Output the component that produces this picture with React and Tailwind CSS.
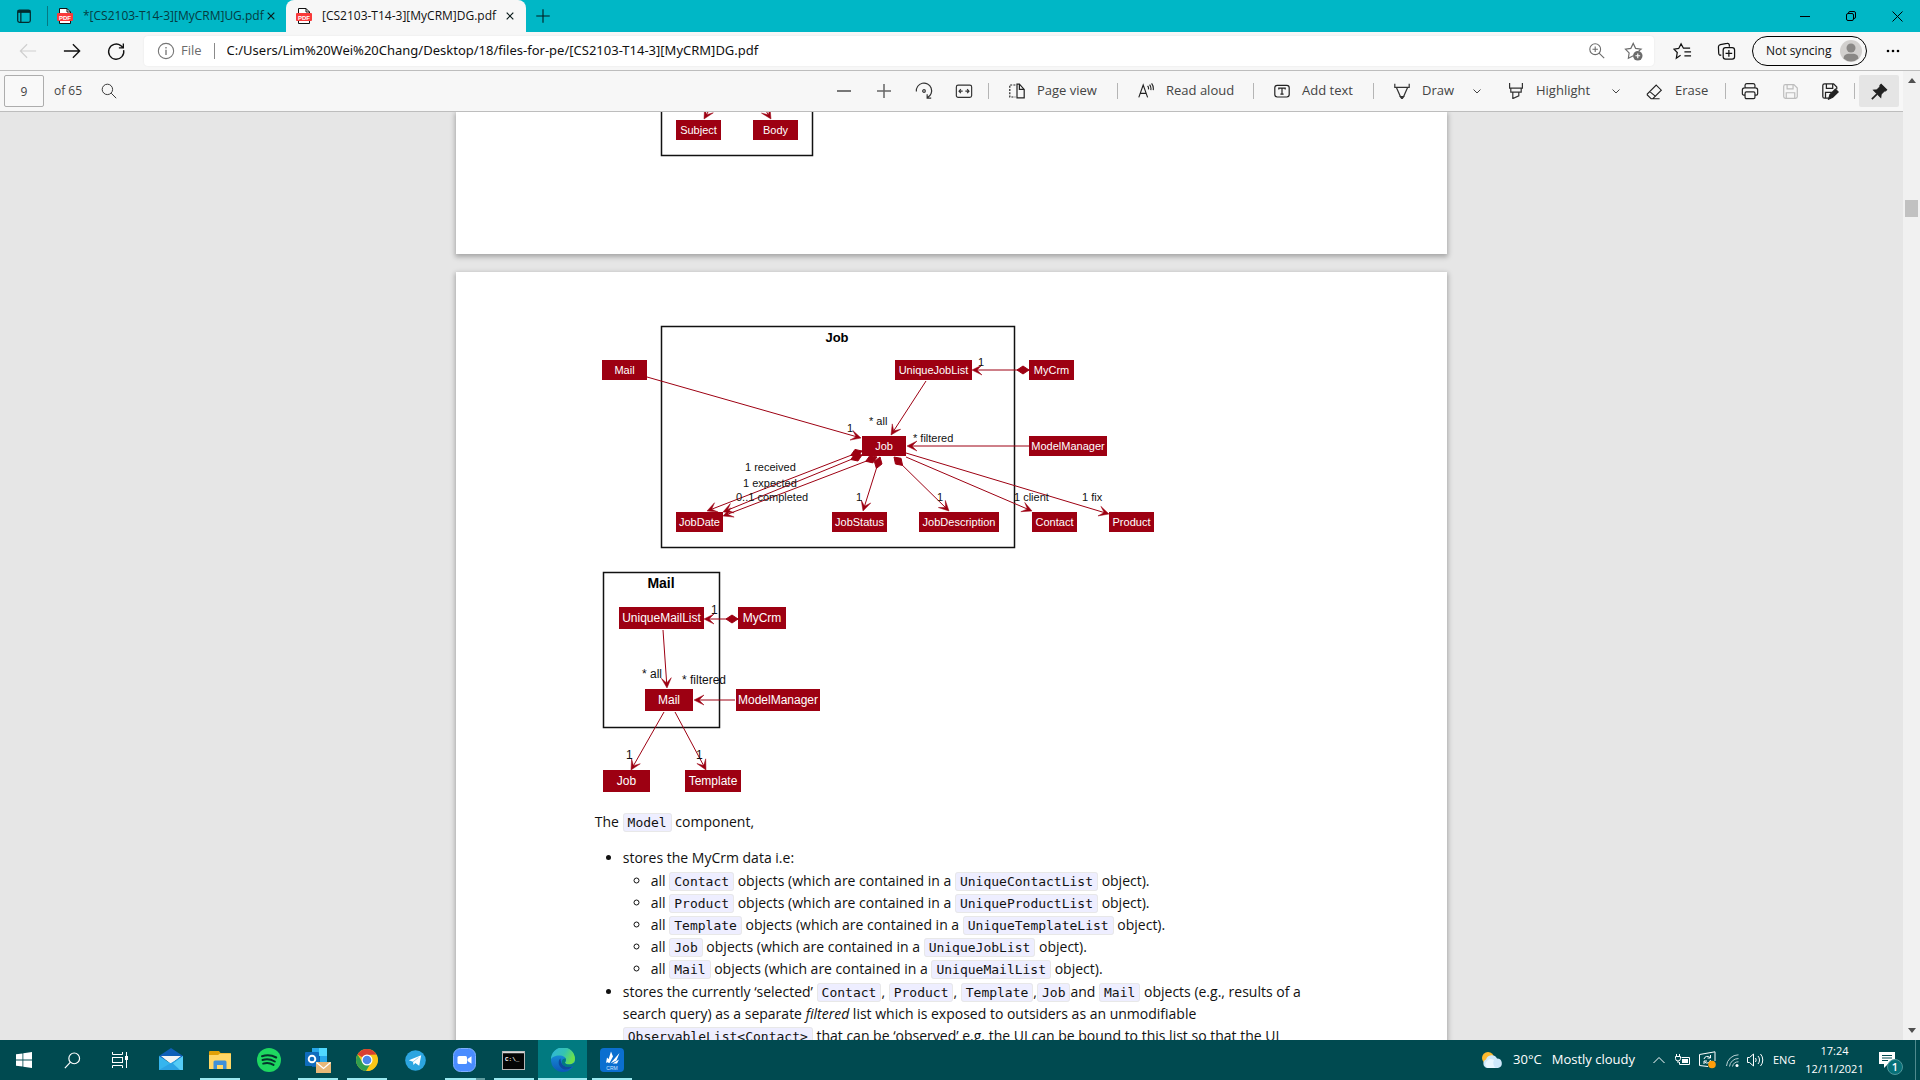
import React from "react";

const RED = "#9d0012";

function Icon({ size = 18, color = "currentColor", width = 1.2, children }) {
  return (
    <svg width={size} height={size} viewBox="0 0 20 20" fill="none" stroke={color} strokeWidth={width} className="shrink-0" aria-hidden="true">
      {children}
    </svg>
  );
}

/* ---------- class diagram parts ---------- */

function Node({ x, y, w, h = 20, size = 11, children }) {
  return (
    <g>
      <rect x={x} y={y} width={w} height={h} fill={RED} />
      <text x={x + w / 2} y={y + h / 2 + 4} fontSize={size} fill="#fff" textAnchor="middle">{children}</text>
    </g>
  );
}

function Edge({ from, to, diamond }) {
  const [x1, y1] = from;
  const [x2, y2] = to;
  const len = Math.hypot(x2 - x1, y2 - y1);
  const ux = (x2 - x1) / len;
  const uy = (y2 - y1) / len;
  const at = (x, y, along, side) => `${x + ux * along - uy * side},${y + uy * along + ux * side}`;
  const head = [at(x2, y2, 0, 0), at(x2, y2, -10, -5), at(x2, y2, -5, 0), at(x2, y2, -10, 5)].join(" ");
  const tail = [at(x1, y1, 0, 0), at(x1, y1, 6, 4), at(x1, y1, 12, 0), at(x1, y1, 6, -4)].join(" ");
  return (
    <g stroke={RED} fill={RED} strokeWidth="1">
      <line x1={x1} y1={y1} x2={x2 - ux * 4} y2={y2 - uy * 4} />
      <polygon points={head} strokeWidth="0.5" />
      {diamond && <polygon points={tail} />}
    </g>
  );
}

function Label({ x, y, size = 11, children }) {
  return <text x={x} y={y} fontSize={size} fill="#111">{children}</text>;
}

function TemplateDiagram() {
  return (
    <svg viewBox="595 112 260 46" width="260" height="46" className="block font-['Liberation_Sans',sans-serif]" role="img" aria-label="Template class diagram">
      <path d="M661.5 112V155.5H812.5V112" fill="none" stroke="#111" strokeWidth="1.5" />
      <Edge from={[716, 98]} to={[704, 119]} />
      <Edge from={[758, 98]} to={[771, 119]} />
      <Node x={676} y={120} w={45}>Subject</Node>
      <Node x={753} y={120} w={45}>Body</Node>
    </svg>
  );
}

function JobDiagram() {
  return (
    <svg viewBox="595 325 560 224" width="560" height="224" className="block font-['Liberation_Sans',sans-serif]" role="img" aria-label="Job class diagram">
      <rect x="661.5" y="326.5" width="353" height="221" fill="none" stroke="#111" strokeWidth="1.5" />
      <text x="837" y="342" fontSize="13" fontWeight="700" textAnchor="middle">Job</text>
      <Edge from={[647, 377]} to={[861, 438]} />
      <Edge from={[926, 381]} to={[891, 435]} />
      <Edge from={[1029, 370]} to={[972, 370]} diamond />
      <Edge from={[1029, 446]} to={[907, 446]} />
      <Edge from={[862, 451]} to={[707, 511]} diamond />
      <Edge from={[862, 455]} to={[723, 512]} diamond />
      <Edge from={[877, 457]} to={[723, 516]} diamond />
      <Edge from={[880, 457]} to={[863, 511]} diamond />
      <Edge from={[894, 457]} to={[949, 511]} diamond />
      <Edge from={[906, 457]} to={[1032, 511]} />
      <Edge from={[906, 453]} to={[1109, 514]} />
      <Node x={602} y={360} w={45}>Mail</Node>
      <Node x={895} y={360} w={77}>UniqueJobList</Node>
      <Node x={1029} y={360} w={45}>MyCrm</Node>
      <Node x={862} y={436} w={44}>Job</Node>
      <Node x={1029} y={436} w={78}>ModelManager</Node>
      <Node x={676} y={512} w={47}>JobDate</Node>
      <Node x={832} y={512} w={55}>JobStatus</Node>
      <Node x={919} y={512} w={80}>JobDescription</Node>
      <Node x={1032} y={512} w={45}>Contact</Node>
      <Node x={1109} y={512} w={45}>Product</Node>
      <Label x={847} y={432}>1</Label>
      <Label x={869} y={425}>* all</Label>
      <Label x={913} y={442}>* filtered</Label>
      <Label x={978} y={366}>1</Label>
      <Label x={745} y={471}>1 received</Label>
      <Label x={743} y={487}>1 expected</Label>
      <Label x={736} y={501}>0..1 completed</Label>
      <Label x={856} y={501}>1</Label>
      <Label x={937} y={501}>1</Label>
      <Label x={1014} y={501}>1 client</Label>
      <Label x={1082} y={501}>1 fix</Label>
    </svg>
  );
}

function MailDiagram() {
  return (
    <svg viewBox="595 571 230 222" width="230" height="222" className="mt-[22px] block font-['Liberation_Sans',sans-serif]" role="img" aria-label="Mail class diagram">
      <rect x="603.5" y="572.5" width="116" height="155" fill="none" stroke="#111" strokeWidth="1.5" />
      <text x="661" y="588" fontSize="14" fontWeight="700" textAnchor="middle">Mail</text>
      <Edge from={[738, 619]} to={[704, 619]} diamond />
      <Edge from={[663, 630]} to={[667, 688]} />
      <Edge from={[735, 700]} to={[694, 700]} />
      <Edge from={[664, 712]} to={[631, 770]} />
      <Edge from={[675, 712]} to={[706, 770]} />
      <Node x={619} y={607} w={85} h={22} size={12}>UniqueMailList</Node>
      <Node x={738} y={607} w={48} h={22} size={12}>MyCrm</Node>
      <Node x={645} y={689} w={48} h={22} size={12}>Mail</Node>
      <Node x={736} y={689} w={84} h={22} size={12}>ModelManager</Node>
      <Node x={603} y={770} w={47} h={22} size={12}>Job</Node>
      <Node x={685} y={770} w={56} h={22} size={12}>Template</Node>
      <Label x={711} y={614} size={12}>1</Label>
      <Label x={642} y={678} size={12}>* all</Label>
      <Label x={682} y={684} size={12}>* filtered</Label>
      <Label x={626} y={759} size={12}>1</Label>
      <Label x={696} y={759} size={12}>1</Label>
    </svg>
  );
}

/* ---------- document text ---------- */

function Code({ children }) {
  return <code className="rounded-[3px] border border-[#e8e8e8] bg-[#eef] px-1 py-px font-['DejaVu_Sans_Mono',monospace] text-[13px] leading-4">{children}</code>;
}

const stored = [
  ["Contact", "UniqueContactList"],
  ["Product", "UniqueProductList"],
  ["Template", "UniqueTemplateList"],
  ["Job", "UniqueJobList"],
  ["Mail", "UniqueMailList"],
];

function ModelText() {
  return (
    <div className="mt-[18px] whitespace-nowrap text-sm leading-[22px] text-[#111]">
      <p>The <Code>Model</Code> component,</p>
      <ul className="mt-[14px] list-disc pl-7">
        <li>
          stores the MyCrm data i.e:
          <ul className="my-px list-[circle] pl-7">
            {stored.map(([item, list]) => (
              <li key={item}>all <Code>{item}</Code> objects (which are contained in a <Code>{list}</Code> object).</li>
            ))}
          </ul>
        </li>
        <li>
          stores the currently ‘selected’ <Code>Contact</Code>, <Code>Product</Code>, <Code>Template</Code>,<Code>Job</Code>and <Code>Mail</Code> objects (e.g., results of a<br />
          search query) as a separate <em>filtered</em> list which is exposed to outsiders as an unmodifiable<br />
          <Code>ObservableList&lt;Contact&gt;</Code> that can be ‘observed’ e.g. the UI can be bound to this list so that the UI
        </li>
      </ul>
    </div>
  );
}

/* ---------- browser chrome ---------- */

function PdfIcon() {
  return (
    <svg width="16" height="16" viewBox="0 0 16 16" className="shrink-0" aria-hidden="true">
      <path d="M2.5.5H10L13.5 4V15.5H2.5Z" fill="#fff" stroke="#111" />
      <path d="M10 .5V4H13.5" fill="none" stroke="#111" />
      <rect x="0" y="5" width="16" height="8" rx="1" fill="#f93a3a" />
      <text x="8" y="11.5" fontSize="6" fontWeight="700" fill="#fff" textAnchor="middle" fontFamily="Liberation Sans, sans-serif">PDF</text>
    </svg>
  );
}

function Tab({ title, active }) {
  return (
    <div role="tab" aria-selected={!!active} className={active ? "flex h-8 w-[240px] items-center rounded-t-lg bg-[#f7f7f7] pl-[10px] text-[#111]" : "flex h-8 w-[238px] items-center pl-[9px] text-[#053b3f]"}>
      <PdfIcon />
      <span className="ml-[10px] flex-1 whitespace-nowrap text-xs">{title}</span>
      <button aria-label={`Close ${title}`} className="mr-2 flex h-4 w-4 items-center justify-center">
        <Icon size={12} width={2} color="#0a1a1a"><path d="M4.5 4.5l11 11M15.5 4.5l-11 11" /></Icon>
      </button>
    </div>
  );
}

function TitleBar() {
  return (
    <header className="flex h-8 shrink-0 items-center bg-[#00b7c6]">
      <button aria-label="Tab actions" className="flex h-8 w-[47px] items-center justify-center pl-px">
        <Icon size={18} width={1.4} color="#032a2d">
          <rect x="3" y="3.5" width="14" height="13.5" rx="2" />
          <path d="M3 5H17" strokeWidth="3" />
          <path d="M6.5 5v12" />
        </Icon>
      </button>
      <span className="h-5 w-px bg-[#067882]" />
      <div role="tablist" className="flex">
        <Tab title="*[CS2103-T14-3][MyCRM]UG.pdf" />
        <Tab title="[CS2103-T14-3][MyCRM]DG.pdf" active />
      </div>
      <button aria-label="New tab" className="flex h-8 w-[34px] items-center justify-center">
        <Icon size={18} width={1.2} color="#021b1d"><path d="M10 2.5v15M2.5 10h15" /></Icon>
      </button>
      <div className="ml-auto flex">
        <button aria-label="Minimise" className="flex h-8 w-[46px] items-center justify-center"><svg width="10" height="10" stroke="#000" fill="none"><path d="M0 5.5h10" /></svg></button>
        <button aria-label="Restore" className="flex h-8 w-[46px] items-center justify-center"><svg width="10" height="10" stroke="#000" fill="none"><rect x=".5" y="2.5" width="7" height="7" rx="1.5" /><path d="M2.5 2.5V2a1.5 1.5 0 0 1 1.5-1.5H8A1.5 1.5 0 0 1 9.5 2V6A1.5 1.5 0 0 1 8 7.5" /></svg></button>
        <button aria-label="Close" className="flex h-8 w-[46px] items-center justify-center"><svg width="11" height="11" stroke="#000" fill="none"><path d="M.5.5l10 10M10.5.5l-10 10" /></svg></button>
      </div>
    </header>
  );
}

function AddressBar() {
  return (
    <div className="flex h-[39px] shrink-0 items-center border-b border-[#bdbdbd] bg-[#f7f7f7] pl-[6px] pr-[5px] text-[#111]">
      <button aria-label="Back" className="flex h-8 w-11 items-center justify-center"><Icon size={18} width={1.3} color="#cfcfcf"><path d="M19 10H1.5M9 2.5L1.5 10 9 17.5" /></Icon></button>
      <button aria-label="Forward" className="flex h-8 w-11 items-center justify-center"><Icon size={18} width={1.5}><path d="M1 10H18.5M11 2.5L18.5 10 11 17.5" /></Icon></button>
      <button aria-label="Refresh" className="flex h-8 w-11 items-center justify-center"><Icon size={19} width={1.4}><path d="M17.5 8.5A8 8 0 1 1 14.5 3.8L17 6M17.2 1.5V6.2H12.5" /></Icon></button>
      <div className="ml-[6px] flex h-[30px] flex-1 items-center rounded bg-white pl-[13px] pr-[11px] shadow-[0_0_2px_rgba(0,0,0,0.08)]">
        <Icon size={18} width={1.2} color="#767676"><circle cx="10" cy="10" r="8.5" /><path d="M10 8.5V14.5M10 5.5V7.2" strokeWidth="1.5" /></Icon>
        <span className="ml-[6px] text-[13px] text-[#6b6b6b]">File</span>
        <span className="ml-3 h-4 w-px bg-[#8a8a8a]" />
        <input aria-label="Address" readOnly value="C:/Users/Lim%20Wei%20Chang/Desktop/18/files-for-pe/[CS2103-T14-3][MyCRM]DG.pdf" className="ml-3 min-w-0 flex-1 bg-transparent font-['Noto_Sans',sans-serif] text-[13px] outline-none" />
        <button aria-label="Zoom" className="flex h-6 w-9 items-center justify-center">
          <Icon size={18} color="#6b6b6b"><circle cx="8" cy="8" r="6" /><path d="M12.3 12.3L18 18M8 5v6M5 8h6" /></Icon>
        </button>
        <button aria-label="Add this page to favourites" className="flex h-6 w-[28px] items-center justify-end">
          <Icon size={19} color="#6b6b6b"><path d="M9.8 14.5L4.6 17.2l.8-5.7L1.5 7.5 7.2 6.7 9.7 1.5 12.2 6.7 18 7.5 15.5 9.5" /><circle cx="14.5" cy="14.5" r="5" fill="#6b6b6b" stroke="none" /><path d="M14.5 12v5M12 14.5h5" stroke="#fff" /></Icon>
        </button>
      </div>
      <button aria-label="Favourites" className="ml-[6px] flex h-8 w-11 items-center justify-center"><Icon size={19} width={1.3}><path d="M8 14L3.5 17l1-6L1 7.5 6 6.8 8.5 2 11 6.5H18M12 10.5H19M12 14.5H19" /></Icon></button>
      <button aria-label="Collections" className="flex h-8 w-11 items-center justify-center"><Icon size={19} width={1.3}><path d="M4.5 13.5L3.2 14A2 2 0 0 1 1.8 12L1.5 5A2.5 2.5 0 0 1 3.5 2.8L10.5 1.5A2 2 0 0 1 13 3.5V5" /><rect x="6.5" y="6" width="12" height="12" rx="2.5" /><path d="M12.5 8.5v7M9 12h7" /></Icon></button>
      <button className="ml-1 flex h-[30px] w-[115px] items-center justify-between whitespace-nowrap rounded-full border border-black pl-[13px] pr-1 text-xs">
        Not syncing
        <svg width="22" height="22" viewBox="0 0 22 22" className="shrink-0" aria-hidden="true"><circle cx="11" cy="11" r="11" fill="#d2d0ce" /><circle cx="11" cy="8" r="4.5" fill="#8a8886" /><path d="M3.5 18.5C4 14 7 13.8 11 13.8s7 .2 7.5 4.7A11 11 0 0 1 3.5 18.5Z" fill="#8a8886" /></svg>
      </button>
      <button aria-label="Settings and more" className="ml-1 flex h-8 w-11 items-center justify-center"><svg width="14" height="4"><circle cx="2" cy="2" r="1.3" /><circle cx="7" cy="2" r="1.3" /><circle cx="12" cy="2" r="1.3" /></svg></button>
    </div>
  );
}

function Divider() {
  return <span className="flex w-[9px] shrink-0 justify-center"><span className="h-4 w-px bg-[#b5b5b5]" /></span>;
}

function Tool({ label, className, children }) {
  return <button className={`flex h-8 shrink-0 items-center gap-3 whitespace-nowrap ${className}`}>{children}{label}</button>;
}

function IconTool({ label, className = "", children }) {
  return <button aria-label={label} className={`flex h-8 w-10 shrink-0 items-center justify-center ${className}`}>{children}</button>;
}

function Chevron({ label }) {
  return <button aria-label={label} className="flex h-8 w-8 shrink-0 items-center justify-center"><svg width="8" height="5" fill="none" stroke="#444"><path d="M.5.5L4 4 7.5.5" /></svg></button>;
}

function PdfToolbar() {
  return (
    <div className="flex h-[41px] shrink-0 items-center border-b border-[#bdbdbd] bg-[#f7f7f7] pl-1 pr-1 text-[13px] text-[#444]">
      <input aria-label="Page number" defaultValue="9" className="h-8 w-10 rounded-[2px] border border-[#adadad] bg-[#f9f9f9] text-center text-xs" />
      <span className="ml-[10px] text-xs">of 65</span>
      <IconTool label="Find" className="ml-[7px] text-[#333]"><Icon size={16}><circle cx="8" cy="8" r="6.5" /><path d="M12.7 12.7L19 19" /></Icon></IconTool>
      <div className="ml-auto flex items-center">
        <IconTool label="Zoom out"><svg width="14" height="14"><path d="M0 7h14" stroke="#777" strokeWidth="2" /></svg></IconTool>
        <IconTool label="Zoom in"><svg width="14" height="14"><path d="M0 7h14M7 0v14" stroke="#666" strokeWidth="1.5" /></svg></IconTool>
        <IconTool label="Rotate"><Icon size={18} color="#333" width={1.3}><path d="M1.5 10.5A8.5 8.5 0 1 1 14 17.2M13.5 13.5V18H18" /><circle cx="10" cy="10" r="1.5" /></Icon></IconTool>
        <IconTool label="Fit to width"><Icon size={18} color="#333" width={1.3}><rect x="1.5" y="3.5" width="17" height="13.5" rx="2" /><path d="M4.5 10.2H8.5M11.5 10.2H15.5M6.5 8L4.5 10.2 6.5 12.4M13.5 8l2 2.2-2 2.2" /></Icon></IconTool>
        <Divider />
        <Tool label="Page view" className="w-[120px] pl-4"><Icon size={16} color="#222" width={1.5}><path d="M8 2.5H1V17.5H8" strokeDasharray="2.5 1.5" /><path d="M10 1.5V18.5H19V8L13 1.5ZM13 1.5V8H19" /></Icon></Tool>
        <Divider />
        <Tool label="Read aloud" className="w-[127px] pl-4"><Icon size={16} color="#222" width={1.4}><path d="M1 18L6.5 2.5 12 18M2.5 13H10.5M12 3.5A5 5 0 0 1 13 8M14.5 2A8.5 8.5 0 0 1 16 9M17 .5A11 11 0 0 1 19 9" /></Icon></Tool>
        <Divider />
        <Tool label="Add text" className="w-[111px] pl-4"><Icon size={16} color="#222" width={1.5}><rect x="1" y="3" width="18" height="14.5" rx="3" /><path d="M6 8V6.5H14V8M10 6.5V14M8 14H12" /></Icon></Tool>
        <Divider />
        <Tool label="Draw" className="w-[83px] pl-4"><Icon size={16} color="#333" width={1.5}><path d="M1 1V5.5H19V1M3 5.5L8 17H12L17 5.5" /><path d="M8 17l2 3 2-3z" fill="#333" /></Icon></Tool>
        <Chevron label="Draw options" />
        <Tool label="Highlight" className="w-[107px] pl-[15px]"><Icon size={16} color="#333" width={1.5}><path d="M2 0V6.5H18V0M3.5 6.5V11.5H16.5V6.5M6 11.5V19.5L13.5 16V11.5" /></Icon></Tool>
        <Chevron label="Highlight options" />
        <Tool label="Erase" className="w-[89px] pl-[14px]"><Icon size={17} color="#222" width={1.3}><path d="M12 2.5L18 8.5 8 18.5H6L1.5 14V13L12 2.5ZM4.5 10.2L11.5 16M7.5 18.5H16" /></Icon></Tool>
        <Divider />
        <IconTool label="Print"><Icon size={18} color="#222" width={1.3}><path d="M4.5 6.5V3.5A2 2 0 0 1 6.5 1.8H13.5A2 2 0 0 1 15.5 3.5V6.5M4.5 14.5H3A1.5 1.5 0 0 1 1.5 13V9A2.5 2.5 0 0 1 4 6.5H16A2.5 2.5 0 0 1 18.5 9V13A1.5 1.5 0 0 1 17 14.5H15.5" /><rect x="4.5" y="11" width="11" height="7.5" rx="1.5" /></Icon></IconTool>
        <IconTool label="Save"><Icon size={17} color="#bdbdbd" width={1.4}><path d="M2 4A2 2 0 0 1 4 2H14L18 6V16A2 2 0 0 1 16 18H4A2 2 0 0 1 2 16ZM6 2V7H13V2M5 18V11.5H15V18" /></Icon></IconTool>
        <IconTool label="Save as"><Icon size={18} color="#222" width={1.4}><path d="M9 18H4A2 2 0 0 1 2 16V4A2 2 0 0 1 4 2H14L17.5 5.5V8M6 2V7H13V2M5 18V11.5H12" /><path d="M8.5 19l1.5-5 6-6 3 3-6 6z" fill="#222" /></Icon></IconTool>
        <Divider />
        <IconTool label="Unpin toolbar" className="rounded-[2px] bg-[#e5e5e5]"><Icon size={17} color="#222"><path d="M12 1.5L18.5 8 17 9.5H15.5L12 13 11.5 17 3 8.5 7 8 10.5 4.5V3Z" fill="#222" /><path d="M7 13L1 19" strokeWidth="2" /></Icon></IconTool>
      </div>
    </div>
  );
}

function ScrollBar() {
  return (
    <div className="flex w-[17px] shrink-0 flex-col items-center bg-[#f1f1f1] py-[7px]">
      <svg width="8" height="5"><path d="M0 5L4 0 8 5Z" fill="#505050" /></svg>
      <div className="mt-[117px] h-[17px] w-[13px] bg-[#c1c1c1]" />
      <svg width="8" height="5" className="mt-auto"><path d="M0 0L4 5 8 0Z" fill="#505050" /></svg>
    </div>
  );
}

/* ---------- taskbar ---------- */

const apps = [
  {
    name: "Mail",
    art: (
      <svg width="24" height="24" viewBox="0 0 24 24"><path d="M0 8L12 0 24 8V12H0Z" fill="#0f5fb8" /><path d="M2 8H22L12 16Z" fill="#f4f4f4" /><path d="M0 8L14 17 12 22H0Z" fill="#35b5ee" /><path d="M24 8V22H0Z" fill="#2ba3e4" /><path d="M24 8L14 15.5 21 22H24Z" fill="#55ccf6" /></svg>
    ),
  },
  {
    name: "File Explorer", open: true,
    art: (
      <svg width="22" height="20" viewBox="0 0 22 20"><path d="M0 2A1 1 0 0 1 1 1H10L11.5 3H21A1 1 0 0 1 22 4V8H0Z" fill="#e0a106" /><path d="M0 5H9L11 3.5H22V19H0Z" fill="#ffd766" /><path d="M4.5 19V12A1.5 1.5 0 0 1 6 10.5H16A1.5 1.5 0 0 1 17.5 12V19H14V15H8V19Z" fill="#3f90d8" /></svg>
    ),
  },
  {
    name: "Spotify",
    art: (
      <svg width="24" height="24" viewBox="0 0 24 24"><circle cx="12" cy="12" r="12" fill="#1ed760" /><path d="M5 8.2C9.5 6.8 15 7.2 19.2 9.5M5.5 12C9.5 10.8 14 11.3 17.8 13.5M6.2 15.6C9.5 14.6 13.5 15 16.5 16.9" fill="none" stroke="#04332c" strokeWidth="2" strokeLinecap="round" /></svg>
    ),
  },
  {
    name: "Outlook", open: true,
    art: (
      <svg width="26" height="26" viewBox="0 0 26 26"><rect x="7" y="1" width="15" height="16" fill="#28a8ea" /><rect x="14" y="1" width="8" height="8" fill="#50d9ff" /><rect x="7" y="9" width="8" height="11" fill="#0a5fae" /><rect x="0" y="5" width="14" height="14" rx="1" fill="#0f6cbd" /><circle cx="7" cy="12" r="3.3" fill="none" stroke="#fff" strokeWidth="1.9" /><rect x="11" y="15" width="15" height="11" fill="#e8b878" /><path d="M11.5 15.5L18.5 21.5 25.5 15.5" fill="none" stroke="#fff" strokeWidth="1.3" /></svg>
    ),
  },
  {
    name: "Chrome", open: true,
    art: (
      <svg width="24" height="24" viewBox="0 0 24 24"><circle cx="12" cy="12" r="11" fill="#fbc617" /><path d="M12 12L2.5 6.5A11 11 0 0 1 21.5 6.5L12 7Z" fill="#d93f31" /><path d="M2.5 6.5A11 11 0 0 0 11 23L16.3 14.5 12 17 7.7 14.5Z" fill="#2f9e4f" /><path d="M12 7H21.5A11 11 0 0 1 11.5 23L16.5 14.5Z" fill="#fbc617" /><circle cx="12" cy="12" r="5.5" fill="#fff" /><circle cx="12" cy="12" r="4.3" fill="#4a86e8" /></svg>
    ),
  },
  {
    name: "Telegram",
    art: (
      <svg width="21" height="21" viewBox="0 0 21 21"><circle cx="10.5" cy="10.5" r="10.3" fill="#2ca5e0" /><path d="M3.8 10.3L16.2 5.3 14.2 15.7 10.3 13 8.5 15 8 11.8Z" fill="#fff" /><path d="M8 11.8L13.5 7.5" stroke="#9fd3ee" strokeWidth="1" /></svg>
    ),
  },
  {
    name: "Zoom", open: "stacked",
    art: (
      <svg width="23" height="24" viewBox="0 0 23 24"><rect x=".5" y=".5" width="22" height="23" rx="7" fill="#4a8cff" stroke="#7fb0ff" /><rect x="4.5" y="8" width="9.5" height="8" rx="1.5" fill="#fff" /><path d="M14.5 11L18.5 8.3V15.7L14.5 13Z" fill="#fff" /></svg>
    ),
  },
  {
    name: "Command Prompt", open: true,
    art: (
      <svg width="23" height="19" viewBox="0 0 23 19"><rect x=".5" y=".5" width="22" height="18" fill="#050505" stroke="#b5b5b5" /><path d="M1 1.5H22" stroke="#d8d8d8" strokeWidth="1.5" /><text x="3" y="9.5" fontSize="6" fontWeight="700" fill="#fff" fontFamily="Liberation Mono, monospace">C:\_</text></svg>
    ),
  },
  {
    name: "Microsoft Edge", open: true, current: true,
    art: (
      <svg width="24" height="24" viewBox="0 0 24 24">
        <defs>
          <linearGradient id="edgeTop" x1="0" y1="0" x2="1" y2=".4"><stop offset="0" stopColor="#2fb4e0" /><stop offset=".6" stopColor="#35c4b0" /><stop offset="1" stopColor="#6be04c" /></linearGradient>
          <linearGradient id="edgeBody" x1="0" y1="0" x2="0" y2="1"><stop offset="0" stopColor="#1ba0e0" /><stop offset="1" stopColor="#0c58b8" /></linearGradient>
        </defs>
        <circle cx="12" cy="12" r="12" fill="url(#edgeBody)" />
        <path d="M0 11.5A12 12 0 0 1 24 11C24 15 21 16.5 17.5 16.5 15 16.5 14 15.5 14 14.8 14 14 15 13.5 15 12 15 9 12 7.5 8.5 7.5 4 7.5 .5 9.5 0 11.5Z" fill="url(#edgeTop)" />
        <path d="M9.5 10.5C7 12 6.5 18 12 21 15.5 22.5 20 20.5 22 18 18 20 9.5 19.5 9.5 10.5Z" fill="#0f4a9e" />
        <path d="M14.8 10.5C15.3 12.8 13.8 13.8 14 14.8 14.2 16 16 16.7 18 16.6 20 16.5 22 16 23.2 14.8L24 15 24 18 22 18C18 20 11 19 10.8 14 10.7 12 12.5 10 14.8 10.5Z" fill="#017a80" />
      </svg>
    ),
  },
  {
    name: "MyCRM", open: true,
    art: (
      <svg width="24" height="24" viewBox="0 0 24 24"><rect width="24" height="24" rx="4" fill="#0b6fd0" /><path d="M6 15L7 9.5 10 12.5ZM7.5 14.5L11 3.5 13 8.5 9.5 15ZM10.5 15.2L19.5 5 16.5 12.5ZM12.5 15.5L19 11.5 17 15.5Z" fill="#fff" /><text x="12" y="21.5" fontSize="5" textAnchor="middle" fill="#cfe6ff" fontFamily="Liberation Sans, sans-serif">CRM</text></svg>
    ),
  },
];

function TaskButton({ app }) {
  return (
    <button aria-label={app.name} className={app.current ? "flex h-10 w-[49px] flex-col items-center bg-[#017a80]" : "flex h-10 w-[49px] flex-col items-center"}>
      <span className="flex h-[38px] items-center pt-[2px]">{app.art}</span>
      {app.open && (
        <span className={app.current ? "flex h-[2px] w-full bg-[#9be9f0]" : "flex h-[2px] w-10 bg-[#9be9f0]"}>
          {app.open === "stacked" && <span className="ml-auto h-[2px] w-[9px] bg-[#5f9c9f]" />}
        </span>
      )}
    </button>
  );
}

function Taskbar() {
  return (
    <footer className="flex h-10 shrink-0 items-center bg-[#004a50] text-white">
      <button aria-label="Start" className="flex h-10 w-12 items-center justify-center"><svg width="16" height="16" viewBox="0 0 16 16" fill="#fff"><path d="M0 2.3L6.5 1.4V7.6H0ZM7.3 1.3L16 0V7.6H7.3ZM0 8.4H6.5V14.6L0 13.7ZM7.3 8.4H16V16L7.3 14.7Z" /></svg></button>
      <button aria-label="Search" className="flex h-10 w-12 items-center justify-center"><Icon size={17} color="#fff" width={1.4}><circle cx="12" cy="7.5" r="6.3" /><path d="M7.6 12L1 19" /></Icon></button>
      <button aria-label="Task view" className="mr-[2px] flex h-10 w-12 items-center justify-center"><svg width="16" height="16" viewBox="0 0 16 16" fill="none" stroke="#fff"><path d="M.5 0V2.5H10.5V0M.5 16V13.5H10.5V16M14.5 0V16" /><rect x=".5" y="5.5" width="10" height="5" /><path d="M14.5 4v4" strokeWidth="3" /></svg></button>
      {apps.map((app) => <TaskButton key={app.name} app={app} />)}
      <div className="ml-auto flex h-10 items-center">
        <button className="flex items-center whitespace-nowrap text-[13px]">
          <svg width="21" height="17" viewBox="0 0 21 17" aria-hidden="true"><circle cx="6" cy="6" r="6" fill="#fdb92e" /><path d="M5 16A4.5 4.5 0 0 1 4 7.5 6 6 0 0 1 15 6.5 4.8 4.8 0 0 1 16 16Z" fill="#cfe8fb" /><path d="M6 16A4 4 0 0 1 5 9 5 5 0 0 1 12 8 6 6 0 0 0 14 16Z" fill="#eaf6ff" /></svg>
          <span className="ml-[10px]">30°C</span>
          <span className="ml-[10px]">Mostly cloudy</span>
        </button>
        <div className="flex items-center">
          <button aria-label="Show hidden icons" className="ml-[18px]"><svg width="12" height="8" fill="none" stroke="#fff"><path d="M.5 7L6 1.5 11.5 7" /></svg></button>
          <svg className="ml-[10px]" width="16" height="14" viewBox="0 0 16 14" fill="none" stroke="#fff" aria-label="Battery"><path d="M1.5 1v2.5M4.5 1v2.5M.5 3.5H5.5V5.5A2.5 2.5 0 0 1 .5 5.5ZM3 8v2" /><path d="M6.5 4.5H14.5V11.5H4.5V9" /><path d="M7 8H13" strokeWidth="4" /></svg>
          <svg className="ml-2" width="18" height="18" viewBox="0 0 18 18" fill="none" stroke="#fff" aria-label="Update"><path d="M.5 3.5L16 .8V10M.5 3.5V14.5L9 15.5" /><path d="M5 8A3.5 3.5 0 0 1 11 6.5M11.5 4V7H8.5M11.5 9A3.5 3.5 0 0 1 5.5 11M5 13V10H8" /><circle cx="13" cy="13.5" r="3.8" fill="#ff9d0a" stroke="none" /></svg>
          <svg className="ml-[9px]" width="13" height="13" viewBox="0 0 13 13" fill="none" stroke="#b8d0d2" aria-label="Wi-Fi"><path d="M.5 12A12 12 0 0 1 12.5 .8M3.5 12.5A9 9 0 0 1 12.5 4.5M6.5 12.5A6 6 0 0 1 12.5 7.8" /><circle cx="11" cy="11.5" r="1.5" fill="#fff" stroke="none" /></svg>
          <svg className="ml-2" width="17" height="14" viewBox="0 0 17 14" fill="none" stroke="#fff" aria-label="Volume"><path d="M.5 4.5H2.5L6.5 1V13L2.5 9.5H.5ZM8.5 5A3.5 3.5 0 0 1 8.5 9M11 3A6 6 0 0 1 11 11M13.5 1A9 9 0 0 1 13.5 13" /></svg>
          <span className="ml-[9px] w-[24px] text-[11px]">ENG</span>
        </div>
        <button className="ml-[7px] w-[61px] text-center text-[11px] leading-[18px]">17:24<br />12/11/2021</button>
        <button aria-label="1 new notification" className="relative ml-[14px] mr-3 h-10 w-6">
          <svg className="absolute left-0 top-3" width="16" height="16" viewBox="0 0 16 16"><path d="M0 0H16V12H9L5 16V12H0Z" fill="#fff" /><path d="M3 3.5H13M3 6H13M3 8.5H9" stroke="#004a50" /></svg>
          <span className="absolute left-2 top-[19px] flex h-4 w-4 items-center justify-center rounded-full border border-[#4f979b] bg-[#067078] text-[11px] font-semibold">1</span>
        </button>
        <span className="mr-1 h-10 w-px bg-[#4f8a8e]" />
      </div>
    </footer>
  );
}

export default function App() {
  return (
    <div className="flex h-screen flex-col overflow-hidden bg-[#e6e6e6] font-['Open_Sans','Noto_Sans',sans-serif]">
      <TitleBar />
      <AddressBar />
      <div className="flex min-h-0 flex-1">
        <div className="flex min-w-0 flex-1 flex-col">
          <PdfToolbar />
          <main className="flex min-h-0 flex-1 flex-col items-center gap-[18px] overflow-hidden">
            <section className="w-[52.1%] shrink-0 bg-white pb-24 pl-[139px] shadow-[0_2px_5px_1px_rgba(0,0,0,0.28)]">
              <TemplateDiagram />
            </section>
            <section className="w-[52.1%] shrink-0 bg-white pb-24 pl-[139px] pt-[53px] shadow-[0_2px_5px_1px_rgba(0,0,0,0.28)]">
              <JobDiagram />
              <MailDiagram />
              <ModelText />
            </section>
          </main>
        </div>
        <ScrollBar />
      </div>
      <Taskbar />
    </div>
  );
}
